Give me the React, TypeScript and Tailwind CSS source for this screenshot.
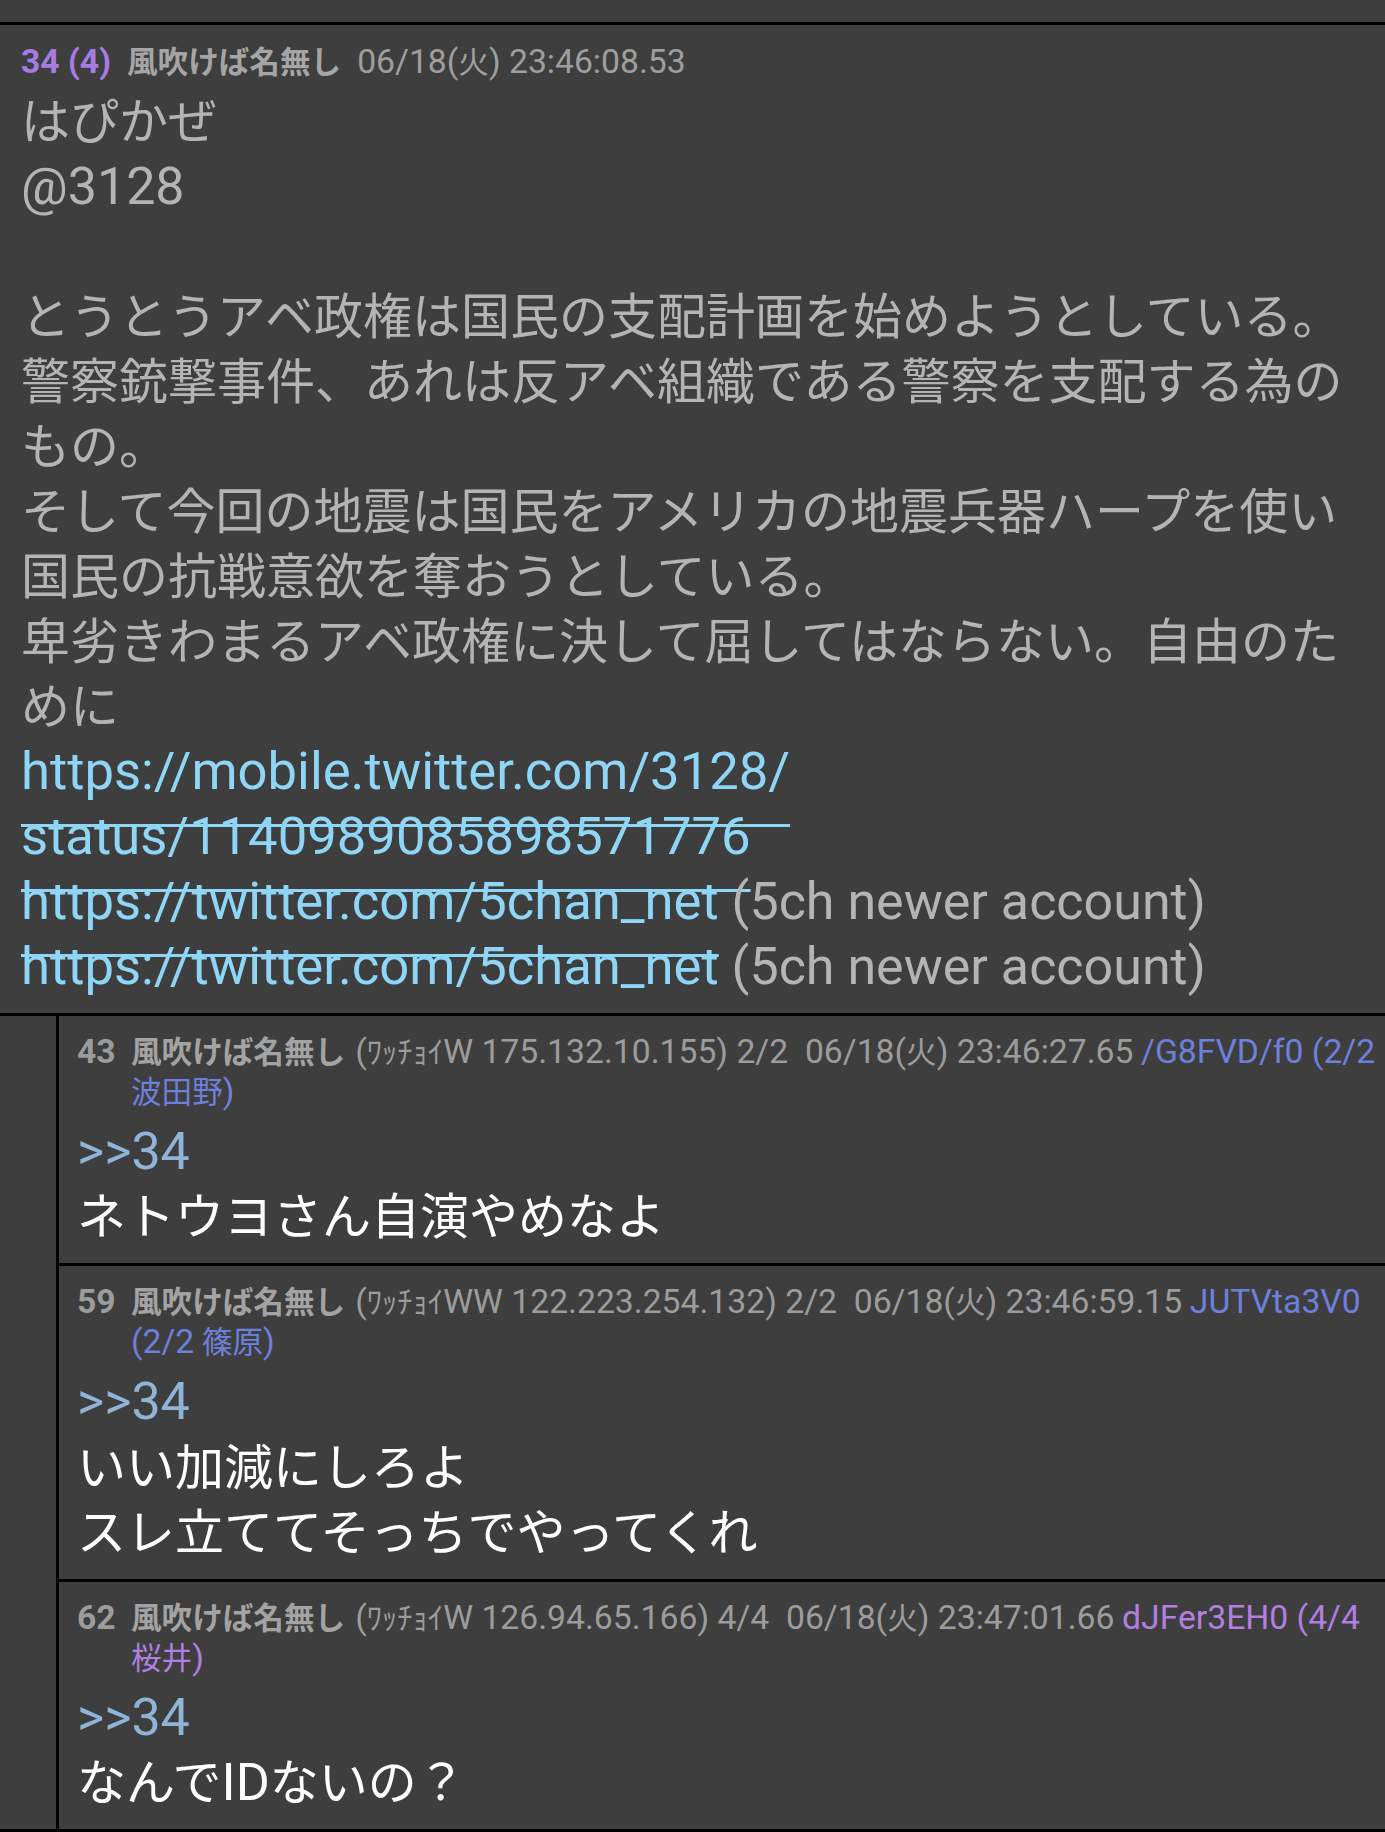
import React from "react";

const BL = ({ children }: { children: React.ReactNode }) => (
  <span className="text-[52px] leading-none">{children}</span>
);
const LL = ({ children }: { children: React.ReactNode }) => (
  <span className="text-[52.6px] leading-none">{children}</span>
);
const HL = ({ children }: { children: React.ReactNode }) => (
  <span className="text-[33.7px] leading-none">{children}</span>
);

function Link({ children }: { children: React.ReactNode }) {
  return (
    <a className="text-[#8fd6f6] underline decoration-[#8fd6f6] decoration-[3px] underline-offset-[35px]">
      {children}
    </a>
  );
}

function Ref() {
  return (
    <span className="text-[#8fb4d8]">
      <BL>&gt;&gt;34</BL>
    </span>
  );
}

type ReplyProps = {
  no: string;
  meta: React.ReactNode;
  id: React.ReactNode;
  idColor: string;
  body: React.ReactNode;
  first?: boolean;
};

function Reply({ no, meta, id, idColor, body, first }: ReplyProps) {
  return (
    <div
      className={
        (first ? "" : "border-t-[3px] border-black ") +
        "pt-[17px] pb-[13px] pl-[18px] pr-0"
      }
    >
      <div className="flex text-[30.6px] leading-[40px] text-[#9c9c9c]">
        <span className="shrink-0 w-[54px] font-bold">
          <HL>{no}</HL>
        </span>
        <div className="flex-1 min-w-0">
          <span className="font-bold text-[#a3a3a3]">風吹けば名無し</span>
          <span className="ml-[10px]">{meta}</span>{" "}
          <span className={idColor}>{id}</span>
        </div>
      </div>
      <div className="mt-[7px] text-[49px] leading-[65.2px] text-white">
        <Ref />
        <br />
        {body}
      </div>
    </div>
  );
}

export default function App() {
  return (
    <div className="w-[1385px] min-h-[1832px] bg-[#3e3e3e] overflow-hidden font-[Roboto,'Noto_Sans_CJK_JP',sans-serif]">
      <div className="h-[22px]" />
      <article className="overflow-hidden border-t-[3px] border-black pt-[18px] pb-[13px] pl-[21px] pr-[4px]">
        <div className="flex text-[30.6px] leading-[40px] text-[#9e9e9e]">
          <span className="font-bold text-[#a77ce2]">
            <HL>34 (4)</HL>
          </span>
          <span className="ml-[16px] font-bold text-[#a5a5a5]">風吹けば名無し</span>
          <span className="ml-[16px]">
            <HL>06/18(</HL>火<HL>) 23:46:08.53</HL>
          </span>
        </div>
        <div className="mt-[7px] text-[49px] leading-[65px] text-[#b4b4b4]">
          はぴかぜ
          <br />
          <BL>@3128</BL>
          <br />
          <br />
          とうとうアベ政権は国民の支配計画を始めようとしている。
          <br />
          警察銃撃事件、あれは反アベ組織である警察を支配する為のもの。
          <br />
          そして今回の地震は国民をアメリカの地震兵器ハープを使い国民の抗戦意欲を奪おうとしている。
          <br />
          卑劣きわまるアベ政権に決して屈してはならない。自由のために
          <br />
          <Link>
            <LL>
              https://mobile.twitter.com/3128/
              <br />
              status/1140989085898571776
            </LL>
          </Link>
          <br />
          <Link>
            <LL>https://twitter.com/5chan_net</LL>
          </Link>
          <BL> (5ch newer account)</BL>
          <br />
          <Link>
            <LL>https://twitter.com/5chan_net</LL>
          </Link>
          <BL> (5ch newer account)</BL>
        </div>
      </article>

      <div className="border-t-[3px] border-b-[3px] border-black pl-[56px]">
        <div className="border-l-[3px] border-black">
          <Reply
            first
            no="43"
            meta={
              <>
                <HL>(</HL>ﾜｯﾁｮｲ<HL>W 175.132.10.155) 2/2{"\u00a0\u00a0"}06/18(</HL>火<HL>) 23:46:27.65</HL>
              </>
            }
            idColor="text-[#6d80dc]"
            id={
              <>
                <HL>/G8FVD/f0 (2/2</HL> 波田野<HL>)</HL>
              </>
            }
            body={<>ネトウヨさん自演やめなよ</>}
          />
          <Reply
            no="59"
            meta={
              <>
                <HL>(</HL>ﾜｯﾁｮｲ<HL>WW 122.223.254.132) 2/2{"\u00a0\u00a0"}06/18(</HL>火<HL>) 23:46:59.15</HL>
              </>
            }
            idColor="text-[#6d80dc]"
            id={
              <>
                <HL>JUTVta3V0 (2/2</HL> 篠原<HL>)</HL>
              </>
            }
            body={
              <>
                いい加減にしろよ
                <br />
                スレ立ててそっちでやってくれ
              </>
            }
          />
          <Reply
            no="62"
            meta={
              <>
                <HL>(</HL>ﾜｯﾁｮｲ<HL>W 126.94.65.166) 4/4{"\u00a0\u00a0"}06/18(</HL>火<HL>) 23:47:01.66</HL>
              </>
            }
            idColor="text-[#b07fe0]"
            id={
              <>
                <HL>dJFer3EH0 (4/4</HL> 桜井<HL>)</HL>
              </>
            }
            body={
              <>
                なんで<BL>ID</BL>ないの？
              </>
            }
          />
        </div>
      </div>
    </div>
  );
}
